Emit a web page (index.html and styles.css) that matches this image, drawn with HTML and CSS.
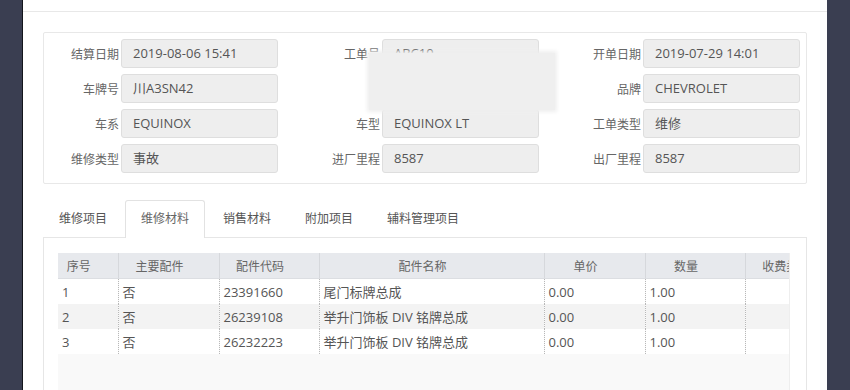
FILE: index.html
```html
<!DOCTYPE html>
<html lang="zh-CN">

<head>
    <meta charset="UTF-8">
    <meta name="viewport" content="width=device-width, initial-scale=1.0">
    <title>工单详情</title>
    <link rel="stylesheet" href="styles.css">
</head>

<body>
    <div class="modal">
        <div class="modal-header"></div>
        <div class="modal-body">
            <div class="info-panel">
                <div class="field"><label>结算日期</label><div class="input">2019-08-06 15:41</div></div>
                <div class="field"><label>工单号</label><div class="input">ABC10</div></div>
                <div class="field"><label>开单日期</label><div class="input">2019-07-29 14:01</div></div>

                <div class="field"><label>车牌号</label><div class="input">川A3SN42</div></div>
                <div class="field"><label></label><div class="input"></div></div>
                <div class="field"><label>品牌</label><div class="input">CHEVROLET</div></div>

                <div class="field"><label>车系</label><div class="input">EQUINOX</div></div>
                <div class="field"><label>车型</label><div class="input">EQUINOX LT</div></div>
                <div class="field"><label>工单类型</label><div class="input">维修</div></div>

                <div class="field"><label>维修类型</label><div class="input">事故</div></div>
                <div class="field"><label>进厂里程</label><div class="input">8587</div></div>
                <div class="field"><label>出厂里程</label><div class="input">8587</div></div>

                <!-- blurred-out part of the screenshot -->
                <div class="redact"></div>
            </div>

            <ul class="tabs">
                <li>维修项目</li>
                <li class="active">维修材料</li>
                <li>销售材料</li>
                <li>附加项目</li>
                <li>辅料管理项目</li>
            </ul>

            <div class="tab-panel">
                <div class="grid">
                    <table>
                        <colgroup>
                            <col style="width: 60px">
                            <col style="width: 101px">
                            <col style="width: 100px">
                            <col style="width: 225px">
                            <col style="width: 101px">
                            <col style="width: 100px">
                            <col style="width: 100px">
                        </colgroup>
                        <thead>
                            <tr>
                                <th>序号</th>
                                <th>主要配件</th>
                                <th>配件代码</th>
                                <th>配件名称</th>
                                <th>单价</th>
                                <th>数量</th>
                                <th>收费类型</th>
                            </tr>
                        </thead>
                        <tbody>
                            <tr>
                                <td>1</td>
                                <td>否</td>
                                <td>23391660</td>
                                <td>尾门标牌总成</td>
                                <td>0.00</td>
                                <td>1.00</td>
                                <td></td>
                            </tr>
                            <tr>
                                <td>2</td>
                                <td>否</td>
                                <td>26239108</td>
                                <td>举升门饰板 DIV 铭牌总成</td>
                                <td>0.00</td>
                                <td>1.00</td>
                                <td></td>
                            </tr>
                            <tr>
                                <td>3</td>
                                <td>否</td>
                                <td>26232223</td>
                                <td>举升门饰板 DIV 铭牌总成</td>
                                <td>0.00</td>
                                <td>1.00</td>
                                <td></td>
                            </tr>
                        </tbody>
                    </table>
                </div>
            </div>
        </div>
    </div>
</body>

</html>
```

FILE: styles.css
```css
body {
    margin: 0;
    height: 390px;
    overflow: hidden;
    background-color: #3a3e51;
    font-family: "Open Sans", "Noto Sans CJK SC", sans-serif;
    color: #555;
}

.modal {
    margin: 0 23px 0 22px;
    height: 390px;
    background-color: #fff;
    border-left: 1px solid #14161c;
    overflow: hidden;
}

.modal-header {
    height: 11px;
    border-bottom: 1px solid #e8e8e8;
}

.modal-body {
    padding: 20px 20px 0 20px;
}

.info-panel {
    position: relative;
    display: grid;
    grid-template-columns: repeat(3, 234px);
    column-gap: 27px;
    row-gap: 6px;
    padding: 6px 5px 10px 0;
    border: 1px solid #e8e8e8;
    border-radius: 2px;
}

.field {
    display: flex;
    align-items: center;
}

.field label {
    width: 75px;
    margin-right: 2px;
    text-align: right;
    font-size: 12px;
    color: #666;
}

.input {
    width: 157px;
    height: 29px;
    box-sizing: border-box;
    padding-left: 11px;
    line-height: 27px;
    font-size: 13px;
    color: #555;
    background-color: #eeeeee;
    border: 1px solid #dedede;
    border-radius: 3px;
}

.redact {
    position: absolute;
    left: 325px;
    top: 20px;
    width: 186px;
    height: 57px;
    background-color: #efefef;
    box-shadow: 0 0 4px 2px #efefef;
}

.tabs {
    display: flex;
    list-style: none;
    margin: 16px 0 0 0;
    padding: 0;
}

.tabs li {
    padding: 0 15px;
    margin-right: 2px;
    height: 36px;
    line-height: 36px;
    font-size: 12px;
    color: #555;
    border: 1px solid transparent;
    border-bottom: none;
    border-radius: 3px 3px 0 0;
}

.tabs li.active {
    position: relative;
    background-color: #fff;
    border-color: #e2e2e2;
    height: 37px;
    margin-bottom: -1px;
    color: #666;
}

.tab-panel {
    border: 1px solid #e6e6e6;
    padding: 15px 15px 0 14px;
    height: 160px;
}

.grid {
    width: 731px;
    height: 140px;
    overflow: hidden;
    background-color: #f9f9f9;
    border-right: 1px solid #eeeeee;
}

table {
    border-collapse: collapse;
    table-layout: fixed;
    width: 787px;
}

th {
    height: 25px;
    padding: 0 18px 0 0;
    font-size: 12px;
    font-weight: normal;
    color: #666;
    text-align: center;
    background-color: #e7e9ed;
    border-left: 1px solid #d6d8dc;
    border-bottom: 1px solid #dcdee2;
    white-space: nowrap;
}

th:first-child,
td:first-child {
    border-left: none;
}

td {
    height: 25px;
    padding: 0 0 0 4px;
    font-size: 13px;
    color: #555;
    background-color: #fff;
    border-left: 1px dotted #b8b8b8;
    white-space: nowrap;
    overflow: hidden;
}

tbody tr:nth-child(even) td {
    background-color: #f3f3f3;
}
```
